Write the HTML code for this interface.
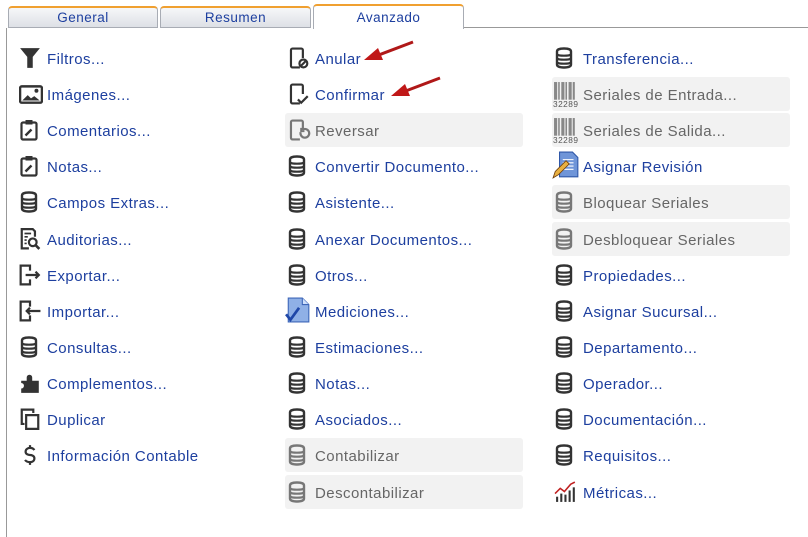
<!DOCTYPE html>
<html><head><meta charset="utf-8"><style>
*{margin:0;padding:0;box-sizing:border-box}
body{width:808px;height:537px;background:#fff;position:relative;overflow:hidden;font-family:"Liberation Sans","DejaVu Sans",sans-serif}
.tab{position:absolute;top:6px;height:22px;border:1px solid #a8acb4;border-top:2px solid #f0a030;border-radius:4px 4px 0 0;background:linear-gradient(#f6f7f9,#dde0e6);color:#1d3f9f;font-size:13.5px;text-align:center;line-height:19px;letter-spacing:.5px}
.tab.act{top:4px;height:25px;background:#fff;border-bottom:none;line-height:23px}
.line{position:absolute;background:#999}
.it{position:absolute;height:34px;width:238px;font-size:15px;letter-spacing:.45px;color:#1d3f9f;line-height:37px;padding-left:30px;white-space:nowrap;overflow:hidden}
.it.dis{background:#f2f2f2;border-radius:3px;color:#666}
.it svg{position:absolute;left:2px;top:6px}
.arrow{position:absolute}
</style></head><body>
<svg width="0" height="0" style="position:absolute"><defs>
<symbol id="db" viewBox="0 0 20 22"><path d="M3 4.5c0-2 3-3 7-3s7 1 7 3v13c0 2-3 3-7 3s-7-1-7-3z" fill="none" stroke="currentColor" stroke-width="2.4"/><path d="M3 7.5c2 1.6 12 1.6 14 0M3 11.5c2 1.6 12 1.6 14 0M3 15.5c2 1.6 12 1.6 14 0" fill="none" stroke="currentColor" stroke-width="2.2"/></symbol>
<symbol id="clip" viewBox="0 0 20 22"><rect x="2.5" y="3.5" width="15" height="17" rx="1.5" fill="none" stroke="currentColor" stroke-width="2.2"/><rect x="6.5" y="1" width="7" height="4.5" fill="currentColor"/><path d="M6.5 16.5l6-6" stroke="currentColor" stroke-width="2.4"/></symbol>
<symbol id="doc" viewBox="0 0 20 22"><path d="M12 20.5H4.5a1.5 1.5 0 0 1-1.5-1.5V3a1.5 1.5 0 0 1 1.5-1.5h9A1.5 1.5 0 0 1 15 3v8" fill="none" stroke="currentColor" stroke-width="2.2"/></symbol>
<symbol id="bar" viewBox="0 0 26 26"><g fill="#888"><rect x="1" y="1" width="3" height="17"/><rect x="5" y="1" width="1.5" height="17"/><rect x="8" y="1" width="3" height="17"/><rect x="12" y="1" width="1.5" height="17"/><rect x="15" y="1" width="3" height="17"/><rect x="19" y="1" width="2" height="17"/></g><text x="0" y="25" font-size="8" font-family="Liberation Sans" fill="#555">32289</text></symbol>
</defs></svg>

<div class="tab" style="left:8px;width:150px">General</div>
<div class="tab" style="left:160px;width:151px">Resumen</div>
<div class="line" style="left:6px;top:28px;width:1px;height:509px"></div>
<div class="line" style="left:463px;top:27px;width:345px;height:1px"></div>
<div class="tab act" style="left:313px;width:151px">Avanzado</div>

<div class="it" style="left:17px;top:41px"><svg width="22" height="22" viewBox="0 0 20 20"><path d="M1 1h18l-6.5 8v10h-5V9z" fill="#333"/></svg>Filtros...</div>
<div class="it" style="left:17px;top:77px"><svg width="24" height="22" viewBox="0 0 22 20"><rect x="1" y="3" width="20" height="15" rx="1.5" fill="none" stroke="#333" stroke-width="2.2"/><path d="M3 16l5-5 3 3 3-2 5 4z" fill="#333"/><circle cx="16" cy="7" r="1.8" fill="#333"/></svg>Imágenes...</div>
<div class="it" style="left:17px;top:113px"><svg width="20" height="22" style="color:#333"><use href="#clip"/></svg>Comentarios...</div>
<div class="it" style="left:17px;top:149px"><svg width="20" height="22" style="color:#333"><use href="#clip"/></svg>Notas...</div>
<div class="it" style="left:17px;top:185px"><svg width="20" height="22" style="color:#333"><use href="#db"/></svg>Campos Extras...</div>
<div class="it" style="left:17px;top:222px"><svg width="22" height="22" viewBox="0 0 20 20"><path d="M9 18.5H2.5V1h10l2 2v5" fill="none" stroke="#333" stroke-width="2"/><path d="M5 5h6M5 8h3M5 11h2M5 14h2" stroke="#333" stroke-width="1.5"/><circle cx="12.5" cy="13" r="3.5" fill="none" stroke="#333" stroke-width="2"/><path d="M15 15.5l3.5 3.5" stroke="#333" stroke-width="2.4"/></svg>Auditorias...</div>
<div class="it" style="left:17px;top:258px"><svg width="22" height="22" viewBox="0 0 20 20"><path d="M10 6V1.5H1.5v17H10v-4.5" fill="none" stroke="#333" stroke-width="2"/><path d="M6 10h12M15 7l3 3-3 3" fill="none" stroke="#333" stroke-width="2"/></svg>Exportar...</div>
<div class="it" style="left:17px;top:294px"><svg width="22" height="22" viewBox="0 0 20 20"><path d="M10 6V1.5H1.5v17H10v-4.5" fill="none" stroke="#333" stroke-width="2"/><path d="M19.5 10H7M10 7l-3 3 3 3" fill="none" stroke="#333" stroke-width="2"/></svg>Importar...</div>
<div class="it" style="left:17px;top:330px"><svg width="20" height="22" style="color:#333"><use href="#db"/></svg>Consultas...</div>
<div class="it" style="left:17px;top:366px"><svg width="22" height="22" viewBox="0 0 20 20"><path d="M2 8h5V5a2.5 2.5 0 0 1 5 0v3h6v11H2v-4a2.5 2.5 0 0 0 0-5z" fill="#333"/></svg>Complementos...</div>
<div class="it" style="left:17px;top:402px"><svg width="22" height="22" viewBox="0 0 20 20"><path d="M6.5 6.5h11v12.5h-11z M13 4.5V1.5H2.5v13h2.5" fill="none" stroke="#333" stroke-width="2"/></svg>Duplicar</div>
<div class="it" style="left:17px;top:438px"><svg width="22" height="22" viewBox="0 0 20 20"><path d="M14 5.5C13 4 11.5 3.5 10 3.5S6 4.5 6 7s3 3 4 3 4 .5 4 3-2 3.5-4 3.5-3.5-.5-4.5-2M10 1v3M10 16v3" fill="none" stroke="#333" stroke-width="2"/></svg>Información Contable</div>

<div class="it" style="left:285px;top:41px"><svg width="24" height="22" viewBox="0 0 22 20" style="color:#333"><use href="#doc" width="20" height="20"/><circle cx="15" cy="15" r="3.6" fill="none" stroke="#333" stroke-width="2"/><path d="M13 17l4-4" stroke="#333" stroke-width="2"/></svg>Anular</div>
<div class="it" style="left:285px;top:77px"><svg width="24" height="22" viewBox="0 0 22 20" style="color:#333"><use href="#doc" width="20" height="20"/><path d="M10 15l3 3 6-6" fill="none" stroke="#333" stroke-width="2"/></svg>Confirmar</div>
<div class="it dis" style="left:285px;top:113px"><svg width="24" height="22" viewBox="0 0 22 20" style="color:#777"><use href="#doc" width="20" height="20"/><path d="M12.5 12a4 4 0 1 0 2-2.5" fill="none" stroke="#777" stroke-width="2"/><path d="M13 8v3h3" fill="none" stroke="#777" stroke-width="1.8"/></svg>Reversar</div>
<div class="it" style="left:285px;top:149px"><svg width="20" height="22" style="color:#333"><use href="#db"/></svg>Convertir Documento...</div>
<div class="it" style="left:285px;top:185px"><svg width="20" height="22" style="color:#333"><use href="#db"/></svg>Asistente...</div>
<div class="it" style="left:285px;top:222px"><svg width="20" height="22" style="color:#333"><use href="#db"/></svg>Anexar Documentos...</div>
<div class="it" style="left:285px;top:258px"><svg width="20" height="22" style="color:#333"><use href="#db"/></svg>Otros...</div>
<div class="it" style="left:285px;top:294px"><svg width="26" height="26" viewBox="0 0 24 24" style="left:0;top:3px"><path d="M3 1h13l6 6v16H3z" fill="#8fb0e6" stroke="#3d66b8"/><path d="M16 1v6h6" fill="#cfe0fb" stroke="#3d66b8"/><path d="M1 16l4 5 8-11" fill="none" stroke="#1f47a8" stroke-width="2.5"/></svg>Mediciones...</div>
<div class="it" style="left:285px;top:330px"><svg width="20" height="22" style="color:#333"><use href="#db"/></svg>Estimaciones...</div>
<div class="it" style="left:285px;top:366px"><svg width="20" height="22" style="color:#333"><use href="#db"/></svg>Notas...</div>
<div class="it" style="left:285px;top:402px"><svg width="20" height="22" style="color:#333"><use href="#db"/></svg>Asociados...</div>
<div class="it dis" style="left:285px;top:438px"><svg width="20" height="22" style="color:#777"><use href="#db"/></svg>Contabilizar</div>
<div class="it dis" style="left:285px;top:475px"><svg width="20" height="22" style="color:#777"><use href="#db"/></svg>Descontabilizar</div>

<div class="it" style="left:552px;top:41px;padding-left:31px"><svg width="20" height="22" style="color:#333"><use href="#db"/></svg>Transferencia...</div>
<div class="it dis" style="left:552px;top:77px;padding-left:31px"><svg width="27" height="27" style="left:1px;top:4px"><use href="#bar"/></svg>Seriales de Entrada...</div>
<div class="it dis" style="left:552px;top:113px;padding-left:31px"><svg width="27" height="27" style="left:1px;top:4px"><use href="#bar"/></svg>Seriales de Salida...</div>
<div class="it" style="left:552px;top:149px;padding-left:31px"><svg width="28" height="28" viewBox="0 0 26 26" style="left:0;top:2px"><path d="M7 1h12l5 5v18H7z" fill="#6f95d8" stroke="#2f57a8"/><path d="M10 8h10M10 11h10M10 14h10M10 17h10" stroke="#fff"/><path d="M1 25l2-6 10-10 3 3-10 10z" fill="#e8b040" stroke="#704010" stroke-width=".8"/></svg>Asignar Revisión</div>
<div class="it dis" style="left:552px;top:185px;padding-left:31px"><svg width="20" height="22" style="color:#777"><use href="#db"/></svg>Bloquear Seriales</div>
<div class="it dis" style="left:552px;top:222px;padding-left:31px"><svg width="20" height="22" style="color:#777"><use href="#db"/></svg>Desbloquear Seriales</div>
<div class="it" style="left:552px;top:258px;padding-left:31px"><svg width="20" height="22" style="color:#333"><use href="#db"/></svg>Propiedades...</div>
<div class="it" style="left:552px;top:294px;padding-left:31px"><svg width="20" height="22" style="color:#333"><use href="#db"/></svg>Asignar Sucursal...</div>
<div class="it" style="left:552px;top:330px;padding-left:31px"><svg width="20" height="22" style="color:#333"><use href="#db"/></svg>Departamento...</div>
<div class="it" style="left:552px;top:366px;padding-left:31px"><svg width="20" height="22" style="color:#333"><use href="#db"/></svg>Operador...</div>
<div class="it" style="left:552px;top:402px;padding-left:31px"><svg width="20" height="22" style="color:#333"><use href="#db"/></svg>Documentación...</div>
<div class="it" style="left:552px;top:438px;padding-left:31px"><svg width="20" height="22" style="color:#333"><use href="#db"/></svg>Requisitos...</div>
<div class="it" style="left:552px;top:475px;padding-left:31px"><svg width="25" height="23" viewBox="0 0 24 22" style="top:5px"><g fill="#333"><rect x="2" y="16" width="2" height="5"/><rect x="6" y="13" width="2" height="8"/><rect x="10" y="14" width="2" height="7"/><rect x="14" y="10" width="2" height="11"/><rect x="18" y="7" width="2" height="14"/></g><path d="M1 13l5-5 4 3 6-7 4-2" fill="none" stroke="#c02020" stroke-width="1.5"/></svg>Métricas...</div>

<svg class="arrow" style="left:360px;top:38px" width="60" height="28" viewBox="0 0 60 28"><path d="M53 4L16 18" stroke="#b01818" stroke-width="3"/><path d="M4 22l14-12 5 12z" fill="#c01818"/></svg>
<svg class="arrow" style="left:387px;top:74px" width="60" height="28" viewBox="0 0 60 28"><path d="M53 4L16 18" stroke="#b01818" stroke-width="3"/><path d="M4 22l14-12 5 12z" fill="#c01818"/></svg>
</body></html>
